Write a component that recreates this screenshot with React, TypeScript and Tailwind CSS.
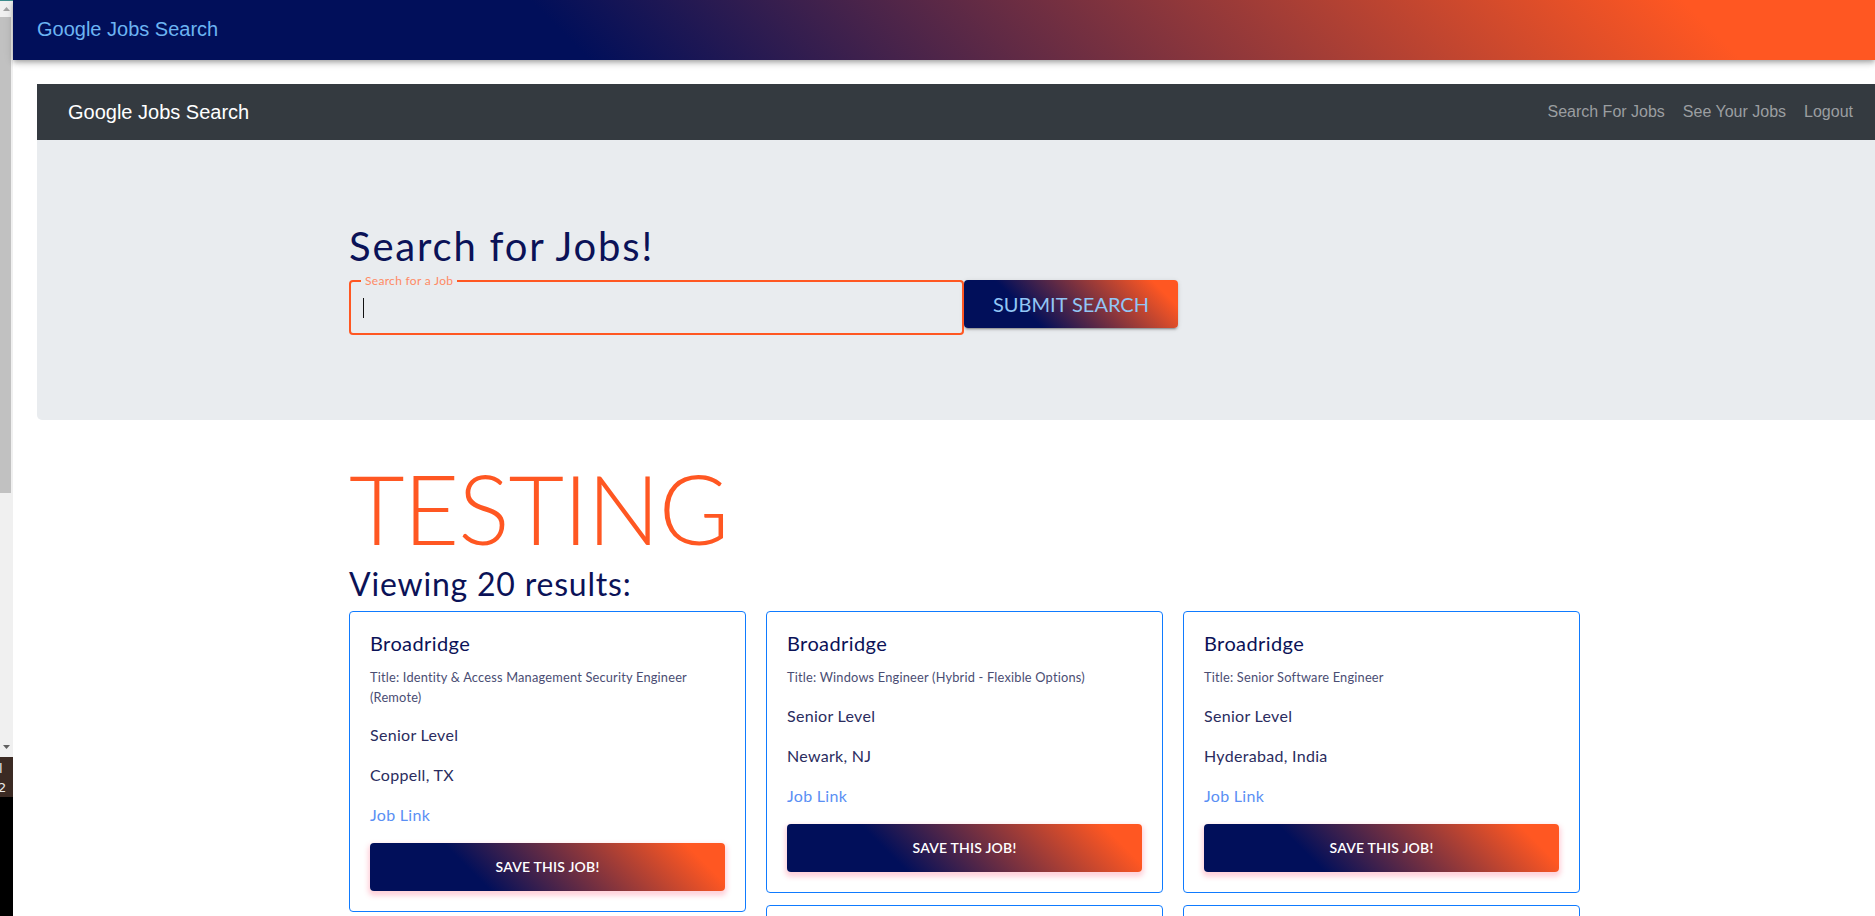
import React from "react";

type Job = {
  company: string;
  title: string;
  level: string;
  location: string;
};

const columns: Job[][] = [
  [
    {
      company: "Broadridge",
      title: "Title: Identity & Access Management Security Engineer (Remote)",
      level: "Senior Level",
      location: "Coppell, TX",
    },
    {
      company: "Broadridge",
      title: "Title: Senior Java Developer",
      level: "Senior Level",
      location: "Jersey City, NJ",
    },
  ],
  [
    {
      company: "Broadridge",
      title: "Title: Windows Engineer (Hybrid - Flexible Options)",
      level: "Senior Level",
      location: "Newark, NJ",
    },
    {
      company: "Broadridge",
      title: "Title: Cloud Engineer",
      level: "Senior Level",
      location: "Lake Success, NY",
    },
  ],
  [
    {
      company: "Broadridge",
      title: "Title: Senior Software Engineer",
      level: "Senior Level",
      location: "Hyderabad, India",
    },
    {
      company: "Broadridge",
      title: "Title: Data Engineer",
      level: "Senior Level",
      location: "Bengaluru, India",
    },
  ],
];

function JobCard({ job }: { job: Job }) {
  return (
    <div className="w-[397px] border border-[#0f7bff] rounded-[4px] p-[20px] bg-white">
      <h5 className="text-[20px] leading-[24px] mb-[12px] text-[#0b1257] tracking-[0.4px] -mt-[1px] pb-[1px]">{job.company}</h5>
      <p className="text-[12.8px] leading-[19.2px] mb-[16px] text-[#4a4d73] tracking-[0.2px]">{job.title}</p>
      <p className="text-[16px] leading-[24px] mb-[16px] text-[#2a2c5e] tracking-[0.3px]">{job.level}</p>
      <p className="text-[16px] leading-[24px] mb-[16px] text-[#2a2c5e] tracking-[0.3px]">{job.location}</p>
      <p className="text-[16px] leading-[24px] mb-[16px] text-[#5a8ff4] tracking-[0.3px]">Job Link</p>
      <button className="w-full h-[48px] rounded-[4px] bg-[linear-gradient(45deg,#010f5a_30%,#ff5722_90%)] shadow-[0_3px_5px_2px_rgba(255,105,135,0.3)] text-white text-[14px] font-semibold uppercase tracking-[0.2px]">
        Save this job!
      </button>
    </div>
  );
}

export default function App() {
  return (
    <div className="flex w-[1875px] h-[916px] overflow-hidden bg-white [font-family:Lato,'Noto_Sans',sans-serif]">
      {/* left strip (other window) */}
      <div className="w-[13px] shrink-0 flex flex-col h-full">
        <div className="h-[757px] bg-[#f0f0f0] flex flex-col border-t border-[#3d8c8c]">
          <div className="h-[16px] flex items-center justify-center">
            <svg width="7" height="4" viewBox="0 0 7 4">
              <polygon points="0,4 3.5,0 7,4" fill="#a3a3a3" />
            </svg>
          </div>
          <div className="w-[11px] h-[476px] bg-[#c1c1c1]" />
          <div className="flex-1" />
          <div className="h-[14px] flex items-start justify-center pt-[2px]">
            <svg width="7" height="4" viewBox="0 0 7 4">
              <polygon points="0,0 3.5,4 7,0" fill="#606060" />
            </svg>
          </div>
        </div>
        <div className="h-[40px] bg-[#3b2a23] overflow-hidden text-[#e8e8e8] text-[13px] leading-[19px] pt-[2px] [font-family:'DejaVu_Sans',sans-serif]">
          <div className="-ml-[1px]">l</div>
          <div className="-ml-[2px]">2</div>
        </div>
        <div className="flex-1 bg-black" />
      </div>

      {/* main page */}
      <div className="flex-1 flex flex-col min-w-0">
        {/* app bar */}
        <div className="h-[60px] shrink-0 flex items-center pl-[24px] pb-[3px] bg-[linear-gradient(45deg,#010f5a_30%,#ff5722_90%)] shadow-[0_2px_4px_-1px_rgba(0,0,0,0.2),0_4px_5px_0_rgba(0,0,0,0.14),0_1px_10px_0_rgba(0,0,0,0.12)] relative z-10">
          <span className="text-[20px] text-[#6cb4f2] [font-family:'Liberation_Sans',Arial,sans-serif]">Google Jobs Search</span>
        </div>

        <div className="ml-[24px] mt-[24px] flex flex-col">
          {/* navbar */}
          <div className="h-[56px] bg-[#343a40] flex items-center justify-between pl-[31px] pr-[22px] [font-family:'Liberation_Sans',Arial,sans-serif]">
            <span className="text-[20px] text-white">Google Jobs Search</span>
            <div className="flex items-center gap-[18px] text-[16px] text-[#9b9ea1]">
              <span>Search For Jobs</span>
              <span>See Your Jobs</span>
              <span>Logout</span>
            </div>
          </div>

          {/* jumbotron */}
          <div className="h-[280px] bg-[#e9ecef] rounded-bl-[5px] pl-[312px] pt-[82px]">
            <h1 className="text-[40px] leading-[48px] text-[#0b1257] mb-[10px] tracking-[1.8px]">Search for Jobs!</h1>
            <div className="flex items-start">
              <div className="relative w-[615px] h-[55px] border-2 border-[#ff5722] rounded-[4px] flex items-center pl-[12px]">
                <span className="absolute -top-[9px] left-[10px] px-[4px] bg-[#e9ecef] text-[12px] leading-[16px] text-[#ff8a65] tracking-[0.3px]">
                  Search for a Job
                </span>
                <span className="w-px h-[20px] bg-[#111]" />
              </div>
              <button className="w-[214px] h-[48px] rounded-[4px] bg-[linear-gradient(45deg,#010f5a_30%,#ff5722_90%)] shadow-[0_3px_1px_-2px_rgba(0,0,0,0.2),0_2px_2px_0_rgba(0,0,0,0.14),0_1px_5px_0_rgba(0,0,0,0.12)] text-[20px] text-[#92c6f5] uppercase">
                Submit Search
              </button>
            </div>
          </div>

          {/* results */}
          <div className="pl-[312px] mt-[30px]">
            <div className="text-[96px] leading-[115px] font-light text-[#ff5722] tracking-[-1px]">TESTING</div>
            <h2 className="text-[32px] leading-[38.4px] text-[#0b1257] tracking-[0.8px]">Viewing 20 results:</h2>
            <div className="mt-[8px] flex items-start gap-[20px]">
              {columns.map((col, i) => (
                <div key={i} className="flex flex-col gap-[12px]">
                  {col.map((job, j) => (
                    <JobCard key={j} job={job} />
                  ))}
                </div>
              ))}
            </div>
          </div>
        </div>
      </div>
    </div>
  );
}
